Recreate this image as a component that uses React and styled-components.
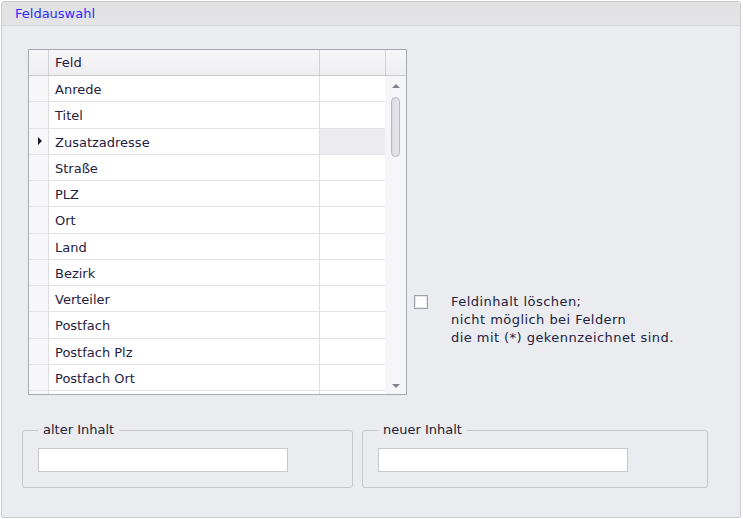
import React from 'react'
import styled, { createGlobalStyle } from 'styled-components'

const GlobalStyle = createGlobalStyle`
   html, body {
      margin: 0;
      padding: 0;
      background: #ffffff;
   }
   body {
      font-family: Tahoma, 'DejaVu Sans', sans-serif;
   }
`

const felder = [
   'Anrede',
   'Titel',
   'Zusatzadresse',
   'Straße',
   'PLZ',
   'Ort',
   'Land',
   'Bezirk',
   'Verteiler',
   'Postfach',
   'Postfach Plz',
   'Postfach Ort',
]

const App = () => {
   return (
      <>
         <GlobalStyle />
         <Panel>
            <PanelHeader>Feldauswahl</PanelHeader>
            <PanelBody>
               <TopRow>
                  <Grid>
                     <GridHeader>
                        <IndicatorCell $head />
                        <FieldCell $head>Feld</FieldCell>
                        <ExtraCell $head />
                        <ScrollHead />
                     </GridHeader>
                     <GridBody>
                        <Rows>
                           {felder.map((f, i) => (
                              <Row key={f}>
                                 <IndicatorCell>{i === 2 && <Arrow />}</IndicatorCell>
                                 <FieldCell>{f}</FieldCell>
                                 <ExtraCell $selected={i === 2} />
                              </Row>
                           ))}
                           <Row>
                              <IndicatorCell />
                              <FieldCell />
                              <ExtraCell />
                           </Row>
                        </Rows>
                        <ScrollBar>
                           <ScrollArrow $up />
                           <Thumb />
                           <ScrollSpacer />
                           <ScrollArrow />
                        </ScrollBar>
                     </GridBody>
                  </Grid>
                  <CheckArea>
                     <CheckBox />
                     <CheckText>
                        Feldinhalt löschen;
                        <br />
                        nicht möglich bei Feldern
                        <br />
                        die mit (*) gekennzeichnet sind.
                     </CheckText>
                  </CheckArea>
               </TopRow>
               <BottomRow>
                  <GroupBox $width={331}>
                     <Legend>alter Inhalt</Legend>
                     <TextInput />
                  </GroupBox>
                  <GroupBox $width={346}>
                     <Legend>neuer Inhalt</Legend>
                     <TextInput />
                  </GroupBox>
               </BottomRow>
            </PanelBody>
         </Panel>
      </>
   )
}

export default App

const Panel = styled.div`
   margin: 1px 0 0 1px;
   width: 740px;
   height: 517px;
   box-sizing: border-box;
   border: 1px solid #c9c9ce;
   border-radius: 3px;
   background: #ebecef;
   display: flex;
   flex-direction: column;
   overflow: hidden;
`

const PanelHeader = styled.div`
   height: 24px;
   box-sizing: border-box;
   padding: 4px 0 0 13px;
   background: linear-gradient(#e1e1e4, #e4e4e7);
   border-bottom: 1px solid #d6d6da;
   color: #2b2bff;
   font-size: 13px;
`

const PanelBody = styled.div`
   padding: 23px 0 0 26px;
   display: flex;
   flex-direction: column;
`

const TopRow = styled.div`
   display: flex;
   align-items: flex-start;
`

const Grid = styled.div`
   width: 379px;
   height: 346px;
   box-sizing: border-box;
   border: 1px solid #a8a8b0;
   background: #ffffff;
   display: flex;
   flex-direction: column;
   overflow: hidden;
`

const GridHeader = styled.div`
   display: flex;
   height: 26px;
   flex-shrink: 0;
   box-sizing: border-box;
   border-bottom: 1px solid #c8c8ce;
   background: linear-gradient(#f6f6f8, #efeff2);
`

const GridBody = styled.div`
   display: flex;
   flex: 1;
   min-height: 0;
`

const Rows = styled.div`
   width: 356px;
   overflow: hidden;
`

const Row = styled.div`
   display: flex;
   height: 26.27px;
   box-sizing: border-box;
   border-bottom: 1px solid #e2e2e8;
`

const IndicatorCell = styled.div`
   width: 20px;
   flex-shrink: 0;
   box-sizing: border-box;
   border-right: 1px solid ${(p) => (p.$head ? '#d0d0d6' : '#dcdce2')};
   background: ${(p) => (p.$head ? 'transparent' : '#f7f7f9')};
   display: flex;
   align-items: center;
   justify-content: center;
`

const FieldCell = styled.div`
   width: 271px;
   flex-shrink: 0;
   box-sizing: border-box;
   border-right: 1px solid ${(p) => (p.$head ? '#d0d0d6' : '#dcdce2')};
   padding: ${(p) => (p.$head ? '5px' : '6px')} 0 0 6px;
   font-size: 13px;
   color: #1f2142;
   white-space: nowrap;
`

const ExtraCell = styled.div`
   flex: 1;
   box-sizing: border-box;
   border-right: ${(p) => (p.$head ? '1px solid #d0d0d6' : 'none')};
   background: ${(p) => (p.$selected ? '#ececf0' : 'transparent')};
`

const ScrollHead = styled.div`
   width: 20px;
   flex-shrink: 0;
`

const Arrow = styled.div`
   width: 0;
   height: 0;
   margin-left: 2px;
   border-top: 4px solid transparent;
   border-bottom: 4px solid transparent;
   border-left: 4px solid #1e1e28;
`

const ScrollBar = styled.div`
   width: 21px;
   background: #f6f6f8;
   display: flex;
   flex-direction: column;
   align-items: center;
   padding: 8px 0 6px;
   box-sizing: border-box;
`

const ScrollArrow = styled.div`
   width: 0;
   height: 0;
   border-left: 4px solid transparent;
   border-right: 4px solid transparent;
   ${(p) =>
      p.$up
         ? 'border-bottom: 4px solid #80808c;'
         : 'border-top: 4px solid #80808c;'}
`

const Thumb = styled.div`
   margin-top: 9px;
   width: 9px;
   height: 60px;
   box-sizing: border-box;
   border: 1px solid #b8b8c0;
   border-radius: 5px;
   background: linear-gradient(90deg, #dcdce2, #e6e6ea);
`

const ScrollSpacer = styled.div`
   flex: 1;
`

const CheckArea = styled.div`
   display: flex;
   align-items: flex-start;
   margin: 246px 0 0 7px;
`

const CheckBox = styled.div`
   width: 14px;
   height: 14px;
   box-sizing: border-box;
   border: 1px solid #a0a0a8;
   background: #ffffff;
   box-shadow: inset 0 0 0 1px #e8e8ec;
`

const CheckText = styled.div`
   margin: -2px 0 0 23px;
   font-size: 13px;
   letter-spacing: 0.45px;
   line-height: 18px;
   color: #222240;
`

const BottomRow = styled.div`
   display: flex;
   gap: 9px;
   margin: 35px 0 0 -6px;
`

const GroupBox = styled.div`
   position: relative;
   width: ${(p) => p.$width}px;
   height: 58px;
   box-sizing: border-box;
   border: 1px solid #c6c6cc;
   border-radius: 3px;
   padding: 17px 0 0 15px;
`

const Legend = styled.div`
   position: absolute;
   top: -9px;
   left: 15px;
   padding: 0 5px;
   background: #ebecef;
   font-size: 13px;
   color: #222236;
`

const TextInput = styled.input`
   width: 250px;
   height: 24px;
   box-sizing: border-box;
   border: 1px solid #c6c6cc;
   background: #ffffff;
   outline: none;
`
